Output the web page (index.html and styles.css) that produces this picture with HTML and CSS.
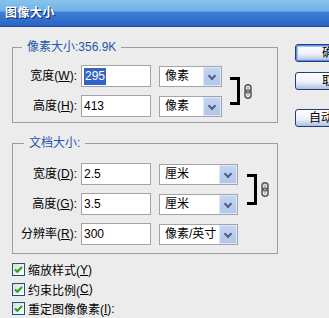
FILE: index.html
```html
<!DOCTYPE html>
<html lang="zh-CN">
<head>
    <meta charset="UTF-8">
    <title>图像大小</title>
    <link rel="stylesheet" href="styles.css">
</head>
<body>
    <div class="titlebar">图像大小</div>

    <div class="dialog">
        <div class="main">
            <fieldset class="group">
                <legend>像素大小:356.9K</legend>
                <div class="rows">
                    <label class="lbl">宽度(<u>W</u>):</label>
                    <div class="field"><span class="selected">295</span></div>
                    <div class="select"><span>像素</span><i class="drop"></i></div>
                    <div class="link link-px">
                        <span class="bracket"></span>
                        <svg class="chain" width="8" height="15" viewBox="0 0 8 15">
                            <rect x="1" y="0.75" width="6" height="8" rx="3" fill="#ddd" stroke="#555" stroke-width="1.5"/>
                            <rect x="1" y="6.25" width="6" height="8" rx="3" fill="none" stroke="#555" stroke-width="1.5"/>
                            <line x1="4" y1="3" x2="4" y2="12" stroke="#999" stroke-width="1"/>
                        </svg>
                    </div>

                    <label class="lbl">高度(<u>H</u>):</label>
                    <div class="field">413</div>
                    <div class="select"><span>像素</span><i class="drop"></i></div>
                </div>
            </fieldset>

            <fieldset class="group doc">
                <legend>文档大小:</legend>
                <div class="rows">
                    <label class="lbl">宽度(<u>D</u>):</label>
                    <div class="field">2.5</div>
                    <div class="select"><span>厘米</span><i class="drop"></i></div>
                    <div class="link link-doc">
                        <span class="bracket"></span>
                        <svg class="chain" width="8" height="15" viewBox="0 0 8 15">
                            <rect x="1" y="0.75" width="6" height="8" rx="3" fill="#ddd" stroke="#555" stroke-width="1.5"/>
                            <rect x="1" y="6.25" width="6" height="8" rx="3" fill="none" stroke="#555" stroke-width="1.5"/>
                            <line x1="4" y1="3" x2="4" y2="12" stroke="#999" stroke-width="1"/>
                        </svg>
                    </div>

                    <label class="lbl">高度(<u>G</u>):</label>
                    <div class="field">3.5</div>
                    <div class="select"><span>厘米</span><i class="drop"></i></div>

                    <label class="lbl">分辨率(<u>R</u>):</label>
                    <div class="field">300</div>
                    <div class="select"><span>像素/英寸</span><i class="drop"></i></div>
                </div>
            </fieldset>

            <div class="checks">
                <div class="check"><span class="box"><svg width="9" height="9" viewBox="0 0 9 9"><path d="M1 4.5 L3.3 6.8 L8 2" fill="none" stroke="#21a121" stroke-width="2"/></svg></span>缩放样式(<u>Y</u>)</div>
                <div class="check"><span class="box"><svg width="9" height="9" viewBox="0 0 9 9"><path d="M1 4.5 L3.3 6.8 L8 2" fill="none" stroke="#21a121" stroke-width="2"/></svg></span>约束比例(<u>C</u>)</div>
                <div class="check"><span class="box"><svg width="9" height="9" viewBox="0 0 9 9"><path d="M1 4.5 L3.3 6.8 L8 2" fill="none" stroke="#21a121" stroke-width="2"/></svg></span>重定图像像素(<u>I</u>):</div>
            </div>
        </div>

        <div class="buttons">
            <button class="btn default">确定</button>
            <button class="btn">取消</button>
            <button class="btn auto">自动(<u>A</u>)...</button>
        </div>
    </div>
</body>
</html>
```

FILE: styles.css
```css
html, body {
    margin: 0;
    padding: 0;
    overflow: hidden;
}

body {
    width: 329px;
    height: 318px;
    background-color: #ececec;
    font-family: 'Liberation Sans', 'Noto Sans CJK SC', sans-serif;
    font-size: 12px;
    color: #000;
}

.titlebar {
    height: 26px;
    line-height: 27px;
    padding-left: 5px;
    background: linear-gradient(#88c3ed 0, #70b2e5 11px, #3b80d7 12px, #2c63c3 26px);
    border-bottom: 1px solid #1d44a3;
    color: #fff;
    font-weight: bold;
    letter-spacing: 0.5px;
    text-shadow: 1px 1px 0 #0b2470;
}

.dialog {
    display: flex;
    align-items: flex-start;
    padding-left: 12px;
}

.main {
    width: 266px;
    flex-shrink: 0;
}

/* fieldsets */
.group {
    margin: 13px 0 0;
    padding: 11px 0 5px;
    border: 1px solid #9d9d9d;
    min-width: 0;
}

.group legend {
    margin-left: 9px;
    padding: 0 5px;
    line-height: 14px;
    color: #2456a8;
}

.group.doc {
    margin-top: 13px;
    padding-top: 13px;
    padding-bottom: 8px;
}

.doc legend {
    margin-left: 11px;
}

.rows {
    display: grid;
    grid-template-columns: 64px 74px 71px auto;
    grid-auto-rows: 22px;
    row-gap: 8px;
}

.doc .rows {
    grid-template-columns: 64px 74px 87px auto;
}

.lbl {
    text-align: right;
    line-height: 22px;
    white-space: nowrap;
}

.field {
    margin-left: 4px;
    height: 20px;
    line-height: 20px;
    padding-left: 2px;
    background-color: #fff;
    border: 1px solid #a4a4a4;
}

.selected {
    background-color: #3164c4;
    color: #fff;
    padding: 1px 1px 2px;
}

.select {
    margin-left: 8px;
    align-self: center;
    height: 19px;
    line-height: 19px;
    padding-left: 5px;
    background-color: #fff;
    border: 1px solid #a4a4a4;
    display: flex;
    justify-content: space-between;
    white-space: nowrap;
}

.drop {
    width: 16px;
    margin: 0;
    border: 1px solid #dfe8f8;
    background: linear-gradient(#c4d5f3, #b2c6ec);
    position: relative;
}

.drop::after {
    content: "";
    position: absolute;
    left: 5px;
    top: 5px;
    width: 4px;
    height: 4px;
    border-right: 2px solid #4d6185;
    border-bottom: 2px solid #4d6185;
    transform: rotate(45deg);
}

/* link bracket + chain */
.link {
    grid-row: 1 / span 2;
    grid-column: 4;
    display: flex;
    align-items: center;
    margin-left: 8px;
}

.link-doc {
    margin-left: 9px;
}

.bracket {
    width: 7px;
    height: 22px;
    border: 3px solid #000;
    border-left: none;
}

.link-doc .bracket {
    height: 25px;
}

.chain {
    margin-left: 4px;
}

/* checkboxes */
.checks {
    margin-top: 6px;
}

.check {
    height: 19.5px;
    display: flex;
    align-items: center;
    white-space: nowrap;
}

.box {
    width: 11px;
    height: 11px;
    margin-right: 3px;
    border: 1px solid #1c5180;
    background: linear-gradient(135deg, #dcdcd7, #fff);
    display: flex;
    align-items: center;
    justify-content: center;
}

/* buttons */
.buttons {
    display: flex;
    flex-direction: column;
    flex-shrink: 0;
    margin-left: 17px;
    padding-top: 17px;
}

.btn {
    width: 78px;
    height: 18px;
    padding: 0;
    font-family: inherit;
    font-size: 12px;
    line-height: 16px;
    color: #000;
    border: 1px solid #1f3f7c;
    border-radius: 3px;
    background: linear-gradient(#fdfdfd, #eef2f9 55%, #aebfe2);
    margin-bottom: 10px;
}

.btn.default {
    box-shadow: inset 0 0 0 1px #5f8fe0, inset 0 0 0 2px #a6c2f0;
}

.btn.auto {
    margin-top: 9px;
}
```
